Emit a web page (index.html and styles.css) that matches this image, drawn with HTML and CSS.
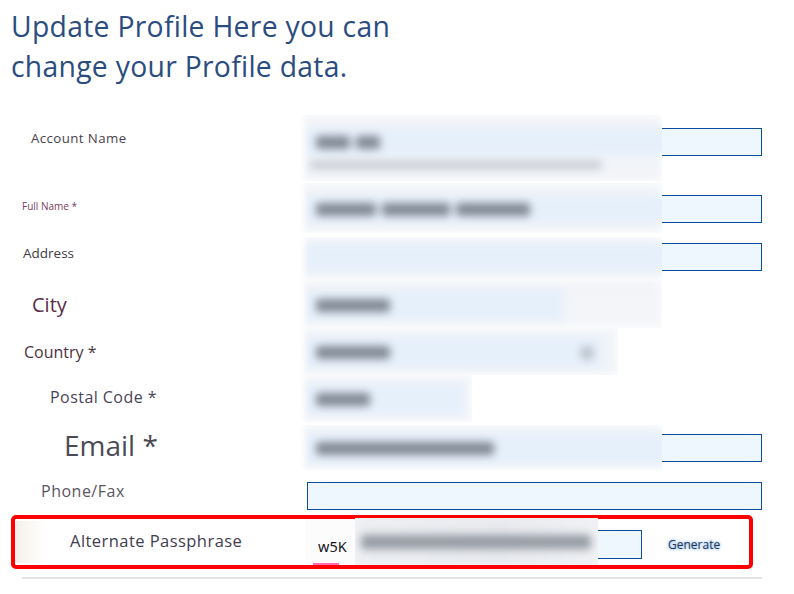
FILE: index.html
```html
<!DOCTYPE html>
<html lang="en">
<head>
<meta charset="utf-8">
<title>Update Profile</title>
<link rel="stylesheet" href="styles.css">
</head>
<body>
<h1 class="title">Update Profile Here you can<br>change your Profile data.</h1>

<form class="form">
  <div class="row r1">
    <div class="lbl l-account">Account Name</div>
    <div class="field f-pt10">
      <div class="inp"></div>
      <div class="mask m1">
        <div class="blur b1">
          <div class="fbox fb-28"><span class="txt w32"></span><span class="txt w22"></span></div>
          <div class="sub"></div>
        </div>
      </div>
    </div>
  </div>

  <div class="row r2">
    <div class="lbl l-full">Full Name *</div>
    <div class="field f-pt12">
      <div class="inp"></div>
      <div class="mask m2">
        <div class="blur b2">
          <div class="fbox fb-28"><span class="txt w58"></span><span class="txt w66"></span><span class="txt w72"></span></div>
        </div>
      </div>
    </div>
  </div>

  <div class="row r3">
    <div class="lbl l-address">Address</div>
    <div class="field f-pt10">
      <div class="inp"></div>
      <div class="mask m3">
        <div class="blur b3">
          <div class="fbox fb-28"></div>
        </div>
      </div>
    </div>
  </div>

  <div class="row r4">
    <div class="lbl l-city">City</div>
    <div class="field">
      <div class="mask m4">
        <div class="blur b4">
          <div class="fbox fb-city"><span class="txt w72"></span></div>
        </div>
      </div>
    </div>
  </div>

  <div class="row r5">
    <div class="lbl l-country">Country *</div>
    <div class="field">
      <div class="mask m5">
        <div class="blur b5">
          <div class="fbox fb-country"><span class="txt w72"></span><span class="arrow"></span></div>
        </div>
      </div>
    </div>
  </div>

  <div class="row r6">
    <div class="lbl l-postal">Postal Code *</div>
    <div class="field">
      <div class="mask m6">
        <div class="blur b6">
          <div class="fbox fb-postal"><span class="txt w52"></span></div>
        </div>
      </div>
    </div>
  </div>

  <div class="row r7">
    <div class="lbl l-email">Email *</div>
    <div class="field f-pt12">
      <div class="inp"></div>
      <div class="mask m7">
        <div class="blur b7">
          <div class="fbox fb-email"><span class="txt w176"></span></div>
        </div>
      </div>
    </div>
  </div>

  <div class="row r8">
    <div class="lbl l-phone">Phone/Fax</div>
    <div class="field f-pt12">
      <div class="inp inp-phone"></div>
    </div>
  </div>

  <div class="alt">
    <span class="smear"></span>
    <div class="lbl l-alt">Alternate Passphrase</div>
    <div class="alt-field">
      <div class="inp inp-alt"></div>
      <span class="chip">w5K<span class="squiggle"></span></span>
      <div class="mask m8">
        <div class="blur b8"><span class="txt w230"></span></div>
      </div>
    </div>
    <span class="gen">Generate</span>
  </div>

  <div class="rule"></div>
</form>
</body>
</html>
```

FILE: styles.css
```css
html, body {
  margin: 0;
  padding: 0;
  background: #ffffff;
}

body {
  font-family: "Open Sans", "Noto Sans", "DejaVu Sans", sans-serif;
  width: 794px;
  height: 594px;
  overflow: hidden;
}

.title {
  margin: 0;
  padding: 6px 0 0 11px;
  font-size: 28.3px;
  letter-spacing: 0.3px;
  line-height: 40px;
  font-weight: 400;
  color: #2b4c7f;
}

.form {
  margin-top: 32px;
}

.row {
  display: grid;
  grid-template-columns: 300px 462px;
  align-items: start;
}

.r1 { height: 65px; }
.r2 { height: 50px; }
.r3 { height: 47px; }
.r4 { height: 48px; }
.r5 { height: 47px; }
.r6 { height: 47px; }
.r7 { height: 48px; }
.r8 { height: 45px; }

.lbl {
  white-space: nowrap;
}

.l-account { padding: 11px 0 0 31px; font-size: 13.3px; letter-spacing: 0.4px; line-height: 18px; color: #4a3f4c; }
.l-full    { padding: 16px 0 0 22px; font-size: 10px; line-height: 14px; color: #7b3d5e; }
.l-address { padding: 10.5px 0 0 23px; font-size: 13.5px; line-height: 19px; color: #423a46; }
.l-city    { padding: 10.7px 0 0 32px; font-size: 20px; line-height: 27px; color: #5a2d47; }
.l-country { padding: 12.5px 0 0 24px; font-size: 16px; line-height: 22px; color: #4b3244; }
.l-postal  { padding: 11px 0 0 50px; font-size: 16px; letter-spacing: 0.45px; line-height: 22px; color: #4a4459; }
.l-email   { padding: 4px 0 0 64px; font-size: 28px; line-height: 38px; color: #4c4a55; }
.l-phone   { padding: 10.8px 0 0 41px; font-size: 16px; letter-spacing: 0.5px; line-height: 21px; color: #5b5562; }

.field {
  position: relative;
  height: 100%;
}

.f-pt10 { padding-top: 10px; box-sizing: border-box; }
.f-pt12 { padding-top: 12px; box-sizing: border-box; }

.inp {
  box-sizing: border-box;
  margin-left: 2px;
  width: 460px;
  height: 28px;
  border: 1px solid #0b4d9b;
  background: #eef6fe;
}

.inp-phone {
  margin-left: 7px;
  width: 455px;
}

/* blurred redaction panels */
.mask {
  position: absolute;
  left: 0;
  overflow: hidden;
  background: #ffffff;
}

.mask::before {
  content: "";
  position: absolute;
  left: 0;
  top: 0;
  bottom: 0;
  width: 8px;
  z-index: 1;
  background: linear-gradient(90deg, rgba(255, 255, 255, 0.9), rgba(255, 255, 255, 0));
}

.blur {
  box-sizing: border-box;
  height: 100%;
  filter: blur(4px);
  background: #f2f4f8;
}

.m1 { top: -3px; width: 362px; height: 66px; }
.m2 { top: 0; width: 362px; height: 50px; }
.m3 { top: 4px; width: 362px; height: 43px; }
.m4 { top: 0; width: 362px; height: 48px; }
.m5 { top: 0; width: 318px; height: 47px; }
.m6 { top: 0; width: 172px; height: 47px; }
.m7 { top: 3px; width: 362px; height: 45px; }

.b1 { padding: 13px 0 0 6px; }
.b2 { padding: 12px 0 0 6px; }
.b3 { padding: 6px 0 0 6px; }
.b4 { padding: 10px 0 0 6px; background: linear-gradient(#f2f4f8, #f4f6f9); }
.b5 { padding: 9px 0 0 6px; }
.b6 { padding: 9px 0 0 6px; }
.b7 { padding: 8px 0 0 6px; }

.fbox {
  display: flex;
  align-items: center;
  gap: 6px;
  box-sizing: border-box;
  padding-left: 10px;
  background: #e6f0fb;
}

.fb-28 { height: 28px; margin-right: -20px; }
.fb-city { height: 31px; width: 258px; }
.fb-country { height: 31px; width: 296px; position: relative; }
.fb-postal { height: 31px; width: 158px; }
.fb-email { height: 31px; margin-right: -20px; }

.txt {
  display: block;
  height: 13px;
  border-radius: 3px;
  background: #7f8893;
}

.w22 { width: 24px; }
.w32 { width: 34px; }
.w52 { width: 54px; }
.w58 { width: 60px; }
.w66 { width: 68px; }
.w72 { width: 74px; }
.w176 { width: 178px; }
.w230 { width: 230px; }

.arrow {
  margin-left: auto;
  margin-right: 8px;
  width: 14px;
  height: 14px;
  border-radius: 50%;
  background: #b9c0c8;
}

.sub {
  margin: 5px 0 0 4px;
  width: 292px;
  height: 8px;
  border-radius: 3px;
  background: #c5cad1;
}

/* alternate passphrase row */
.alt {
  position: relative;
  box-sizing: border-box;
  display: grid;
  grid-template-columns: 290px 337px auto;
  align-items: start;
  margin-left: 11px;
  width: 742px;
  height: 54px;
  border: 4px solid #ff0000;
  border-radius: 5px;
}

.smear {
  position: absolute;
  left: 0;
  top: 2px;
  width: 30px;
  height: 42px;
  background: linear-gradient(90deg, rgba(225, 210, 195, 0.35), rgba(255, 255, 255, 0));
}

.l-alt {
  padding: 11px 0 0 55px;
  font-size: 16.5px;
  letter-spacing: 0.45px;
  line-height: 22px;
  color: #3f3d50;
}

.alt-field {
  position: relative;
  height: 100%;
  padding-top: 11px;
  box-sizing: border-box;
}

.inp-alt {
  margin-left: 0;
  width: 337px;
  height: 29px;
}

.chip {
  position: absolute;
  left: 0;
  top: 0;
  box-sizing: border-box;
  width: 52px;
  height: 46px;
  padding: 18px 0 0 13px;
  background: #fcfcfd;
  font-size: 14.5px;
  line-height: 18px;
  color: #14141c;
  font-family: "Noto Sans", "Open Sans", sans-serif;
}

.squiggle {
  position: absolute;
  left: 8px;
  bottom: 0;
  width: 26px;
  height: 2px;
  background: #ff6eb0;
}

.m8 {
  left: 50px;
  top: -1px;
  width: 243px;
  height: 47px;
  background: #f4f5f7;
}

.m8::before {
  display: none;
}

.b8 {
  display: flex;
  align-items: center;
  padding-left: 6px;
  background: linear-gradient(90deg, #eceef1, #e7e9ed 60%, #eef0f3);
}

.b8 .txt {
  height: 14px;
  background: #959ba4;
}

.gen {
  margin: 18px 0 0 26px;
  font-size: 12px;
  line-height: 16px;
  color: #2b3552;
  text-shadow: 0 0 2px #9ec8f0, 0 0 3px #9ec8f0, 0 0 4px #b8d8f5;
}

.rule {
  margin: 8px 0 0 22px;
  width: 740px;
  height: 2px;
  background: #e4e4e6;
}
```
